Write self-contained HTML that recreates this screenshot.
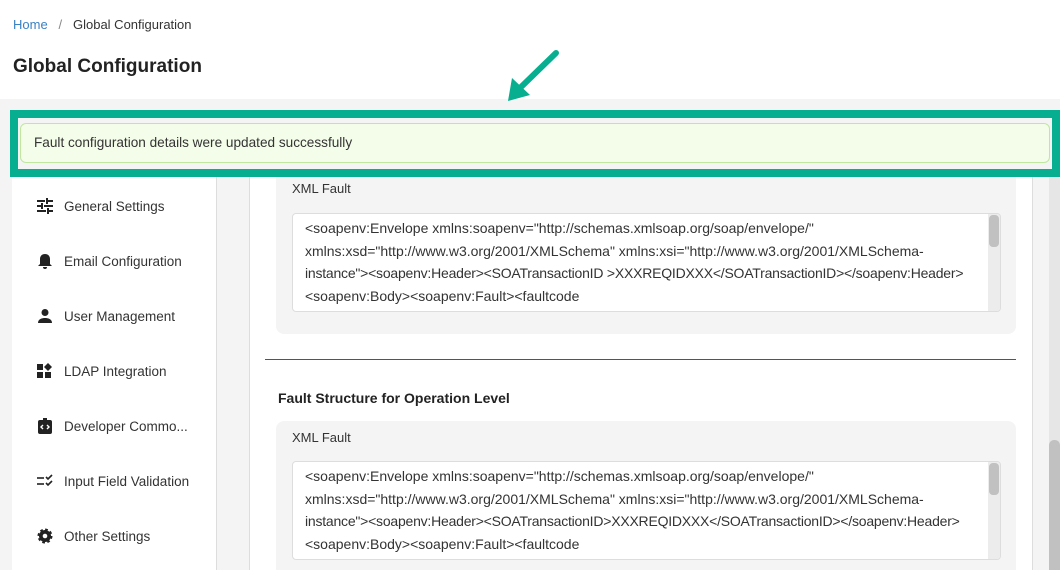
<!DOCTYPE html>
<html><head><style>
*{box-sizing:border-box;margin:0;padding:0}
html,body{width:1060px;height:570px;overflow:hidden}
body{background:#f4f4f4;font-family:"Liberation Sans",sans-serif;color:#222;position:relative}
.top{position:absolute;left:0;top:0;width:1060px;height:99px;background:#fff}
.bc{position:absolute;left:13px;top:17px;font-size:13px;color:#333}
.bc a{color:#3b82c4}
h1{position:absolute;left:13px;top:56px;font-size:19px;font-weight:bold;color:#222}
.hl{position:absolute;left:10px;top:110px;width:1050px;height:67px;border:8px solid #07ae8f;background:#f4f4f4;z-index:5}
.alert{position:absolute;left:20px;top:123px;width:1030px;height:40px;background:#f4fde9;border:1px solid #bfe79f;border-radius:6px;font-size:13.6px;padding:11px 13px;color:#333;z-index:6}
.side{position:absolute;left:12px;top:177px;width:205px;height:400px;background:#fff;border-right:1px solid #ddd}
.item{position:absolute;left:36px;font-size:13.5px;color:#333;display:flex;align-items:center}
.item svg{width:18px;height:18px;margin-right:10px}
.main{position:absolute;left:249px;top:177px;width:784px;height:400px;background:#fff;border-left:1px solid #ddd;border-right:1px solid #ddd}
.card{position:absolute;left:276px;width:740px;background:#f4f4f4;border-radius:8px}
.lbl{position:absolute;left:292px;font-size:13px;color:#333}
.ta{position:absolute;left:292px;width:709px;height:99px;background:#fff;border:1px solid #ddd;border-radius:4px;font-size:14px;line-height:22.7px;padding:3px 24px 0 12px;color:#333;overflow:hidden;white-space:nowrap}
.ta .sb{position:absolute;right:0;top:0;width:12px;height:100%;background:#ececec}
.ta .sb i{position:absolute;left:1px;top:1px;width:10px;height:32px;background:#c1c1c1;border-radius:4px}
.l3{letter-spacing:-0.22px}
.div{position:absolute;left:265px;top:359px;width:751px;height:1px;background:#555}
h3{position:absolute;left:278px;top:390px;font-size:14px;font-weight:bold;color:#222}
.vsb{position:absolute;left:1049px;top:177px;width:11px;height:400px;background:#e6e6e6}
.vsb i{position:absolute;left:0;top:263px;width:11px;height:140px;background:#c1c1c1;border-radius:5px}
</style></head><body>
<div class="top"></div>
<div class="bc"><a>Home</a> &nbsp;&nbsp;<span style="color:#888">/</span>&nbsp;&nbsp; Global Configuration</div>
<h1>Global Configuration</h1>
<svg style="position:absolute;left:500px;top:48px" width="64" height="58"><line x1="56" y1="5" x2="20" y2="40" stroke="#07ae8f" stroke-width="6" stroke-linecap="round"/><polygon points="8,53 12,30 30,47" fill="#07ae8f"/></svg>
<div class="hl"></div>
<div class="alert">Fault configuration details were updated successfully</div>
<div class="side"></div>
<div class="item" style="top:197px"><svg viewBox="0 0 18 18" fill="#222"><rect x="1" y="3" width="8" height="2"/><rect x="12" y="3" width="5" height="2"/><rect x="10" y="1" width="2" height="6"/><rect x="1" y="8" width="4" height="2"/><rect x="8" y="8" width="9" height="2"/><rect x="5" y="6" width="2" height="6"/><rect x="1" y="13" width="9" height="2"/><rect x="13" y="13" width="4" height="2"/><rect x="11" y="11" width="2" height="6"/></svg>General Settings</div>
<div class="item" style="top:252px"><svg viewBox="0 0 18 18" fill="#222"><path d="M9 2c-3 0-5 2-5 5v5l-2 2h14l-2-2V7c0-3-2-5-5-5zM7 15h4a2 2 0 0 1-4 0z"/></svg>Email Configuration</div>
<div class="item" style="top:307px"><svg viewBox="0 0 18 18" fill="#222"><circle cx="9" cy="5.5" r="3.5"/><path d="M2 16c0-4 4-5 7-5s7 1 7 5z"/></svg>User Management</div>
<div class="item" style="top:362px"><svg viewBox="0 0 18 18" fill="#222"><rect x="1" y="2" width="6" height="6"/><rect x="1" y="10" width="6" height="6"/><rect x="9" y="10" width="6" height="6"/><polygon points="12,1 16,5 12,9 8,5"/></svg>LDAP Integration</div>
<div class="item" style="top:417px"><svg viewBox="0 0 18 18"><rect x="2" y="3" width="14" height="14" rx="2" fill="#222"/><rect x="7" y="1" width="4" height="3" fill="#222"/><path d="M7 8l-2 2 2 2M11 8l2 2-2 2" stroke="#fff" stroke-width="1.4" fill="none"/></svg>Developer Commo...</div>
<div class="item" style="top:472px"><svg viewBox="0 0 18 18" fill="none" stroke="#222" stroke-width="1.6"><line x1="1" y1="6" x2="8" y2="6"/><line x1="1" y1="12" x2="8" y2="12"/><path d="M10 5l2 2 4-4M10 11l2 2 4-4"/></svg>Input Field Validation</div>
<div class="item" style="top:527px"><svg viewBox="0 0 18 18"><circle cx="9" cy="9" r="6" fill="#222" stroke="#222" stroke-width="3" stroke-dasharray="2.5 2.2"/><circle cx="9" cy="9" r="2.3" fill="#fff"/></svg>Other Settings</div>
<div class="main"></div>
<div class="card" style="top:160px;height:174px"></div>
<div class="lbl" style="top:181px">XML Fault</div>
<div class="ta" style="top:213px">&lt;soapenv:Envelope xmlns:soapenv="http://schemas.xmlsoap.org/soap/envelope/"<br>xmlns:xsd="http://www.w3.org/2001/XMLSchema" xmlns:xsi="http://www.w3.org/2001/XMLSchema-<br><span class="l3">instance"&gt;&lt;soapenv:Header&gt;&lt;SOATransactionID &gt;XXXREQIDXXX&lt;/SOATransactionID&gt;&lt;/soapenv:Header&gt;</span><br>&lt;soapenv:Body&gt;&lt;soapenv:Fault&gt;&lt;faultcode<div class="sb"><i></i></div></div>
<div class="div"></div>
<h3>Fault Structure for Operation Level</h3>
<div class="card" style="top:421px;height:160px"></div>
<div class="lbl" style="top:430px">XML Fault</div>
<div class="ta" style="top:461px">&lt;soapenv:Envelope xmlns:soapenv="http://schemas.xmlsoap.org/soap/envelope/"<br>xmlns:xsd="http://www.w3.org/2001/XMLSchema" xmlns:xsi="http://www.w3.org/2001/XMLSchema-<br><span class="l3">instance"&gt;&lt;soapenv:Header&gt;&lt;SOATransactionID&gt;XXXREQIDXXX&lt;/SOATransactionID&gt;&lt;/soapenv:Header&gt;</span><br>&lt;soapenv:Body&gt;&lt;soapenv:Fault&gt;&lt;faultcode<div class="sb"><i></i></div></div>
<div class="vsb"><i></i></div>
</body></html>
